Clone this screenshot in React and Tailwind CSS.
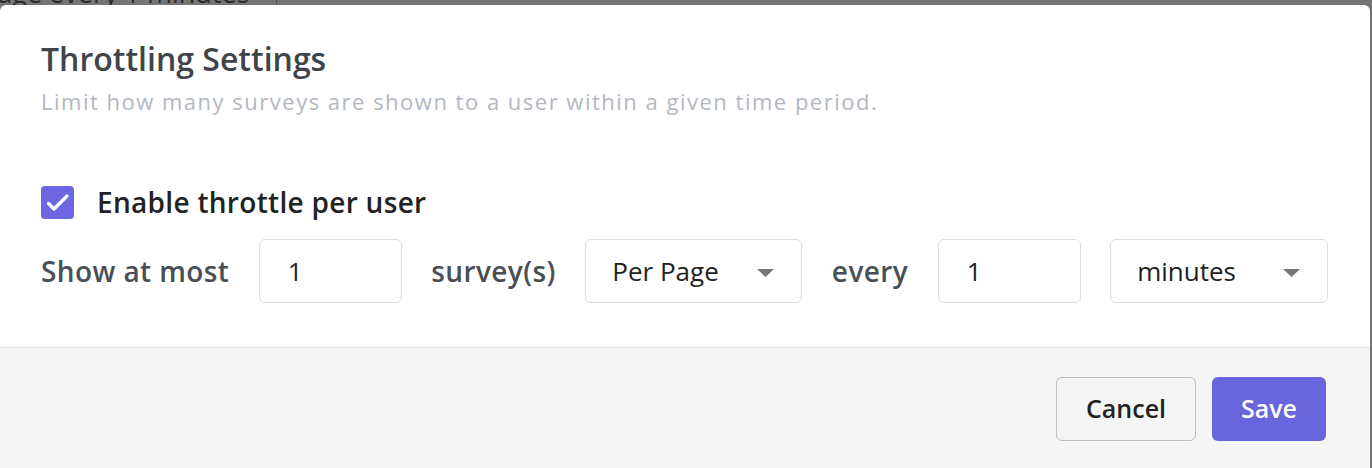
import { useState } from "react";

function NumberBox({ value }) {
  return (
    <div className="flex h-16 w-[143px] shrink-0 items-center rounded-md border border-[#dcdde2] bg-white pl-[28px] text-[26px] font-normal tracking-normal text-[#222]">
      {value}
    </div>
  );
}

function SelectBox({ label, width }) {
  return (
    <div className={`flex h-16 shrink-0 items-center justify-between rounded-md border border-[#dcdde2] bg-white pl-[26px] pr-[27px] text-[26px] font-normal tracking-normal text-[#222] ${width}`}>
      <span>{label}</span>
      <svg width="17" height="8" viewBox="0 0 17 8" className="mt-[4px]">
        <path d="M0 0h17l-8.5 8z" fill="#757575" />
      </svg>
    </div>
  );
}

export default function App() {
  const [enabled, setEnabled] = useState(true);

  return (
    <div className="h-[468px] w-[1372px] overflow-hidden bg-[#757575] font-['Open_Sans',sans-serif]">
      <div className="flex h-[5px] overflow-hidden">
        <p className="mt-[-23px] ml-[-19px] w-[296px] shrink-0 whitespace-nowrap border-r border-[#555] text-[27px] leading-[32px] text-[#2c2c2c]">
          Page every 1 minutes
        </p>
      </div>

      <div className="mr-[2px] flex h-[463px] flex-col overflow-hidden rounded-t-md bg-white">
        <div className="flex flex-col pl-[41px] pr-[44px] pt-[34px] pb-[44px]">
          <h2 className="text-[32px] leading-[40px] font-semibold text-[#3f444b]">Throttling Settings</h2>
          <p className="mt-[7px] text-[22px] leading-[30px] tracking-[1.5px] text-[#b3b7bf]">
            Limit how many surveys are shown to a user within a given time period.
          </p>

          <label className="mt-[69px] flex items-center gap-[23px]">
            <button
              type="button"
              onClick={() => setEnabled((v) => !v)}
              className={`flex h-[33px] w-[33px] shrink-0 items-center justify-center rounded-[4px] ${enabled ? "bg-[#6c67e1]" : "border border-gray-400 bg-white"}`}
            >
              {enabled && (
                <svg width="33" height="33" viewBox="0 0 33 33" fill="none" stroke="white" strokeWidth="3.2" strokeLinecap="round" strokeLinejoin="round">
                  <path d="M7.5 17.5l5.5 5.5L26 10" />
                </svg>
              )}
            </button>
            <span className="text-[28px] leading-[34px] font-semibold tracking-[0.3px] text-[#222]">Enable throttle per user</span>
          </label>

          <div className="mt-[20px] flex items-center gap-[29.5px] whitespace-nowrap text-[28px] font-semibold tracking-[0.4px] text-[#4a4f57]">
            <span className="shrink-0">Show at most</span>
            <NumberBox value="1" />
            <span className="shrink-0">survey(s)</span>
            <SelectBox label="Per Page" width="w-[217px]" />
            <span className="shrink-0">every</span>
            <NumberBox value="1" />
            <SelectBox label="minutes" width="w-[218px]" />
          </div>
        </div>

        <div className="flex flex-1 items-start justify-end gap-4 border-t border-[#e2e2e2] bg-[#f5f5f5] pr-[44px] pt-[29px]">
          <button type="button" className="h-16 w-[140px] rounded-md border border-[#b9bdc5] text-[25px] font-semibold text-[#222]">
            Cancel
          </button>
          <button type="button" className="h-16 w-[114px] rounded-md bg-[#6866dc] text-[25px] font-semibold text-white">
            Save
          </button>
        </div>
      </div>
    </div>
  );
}
